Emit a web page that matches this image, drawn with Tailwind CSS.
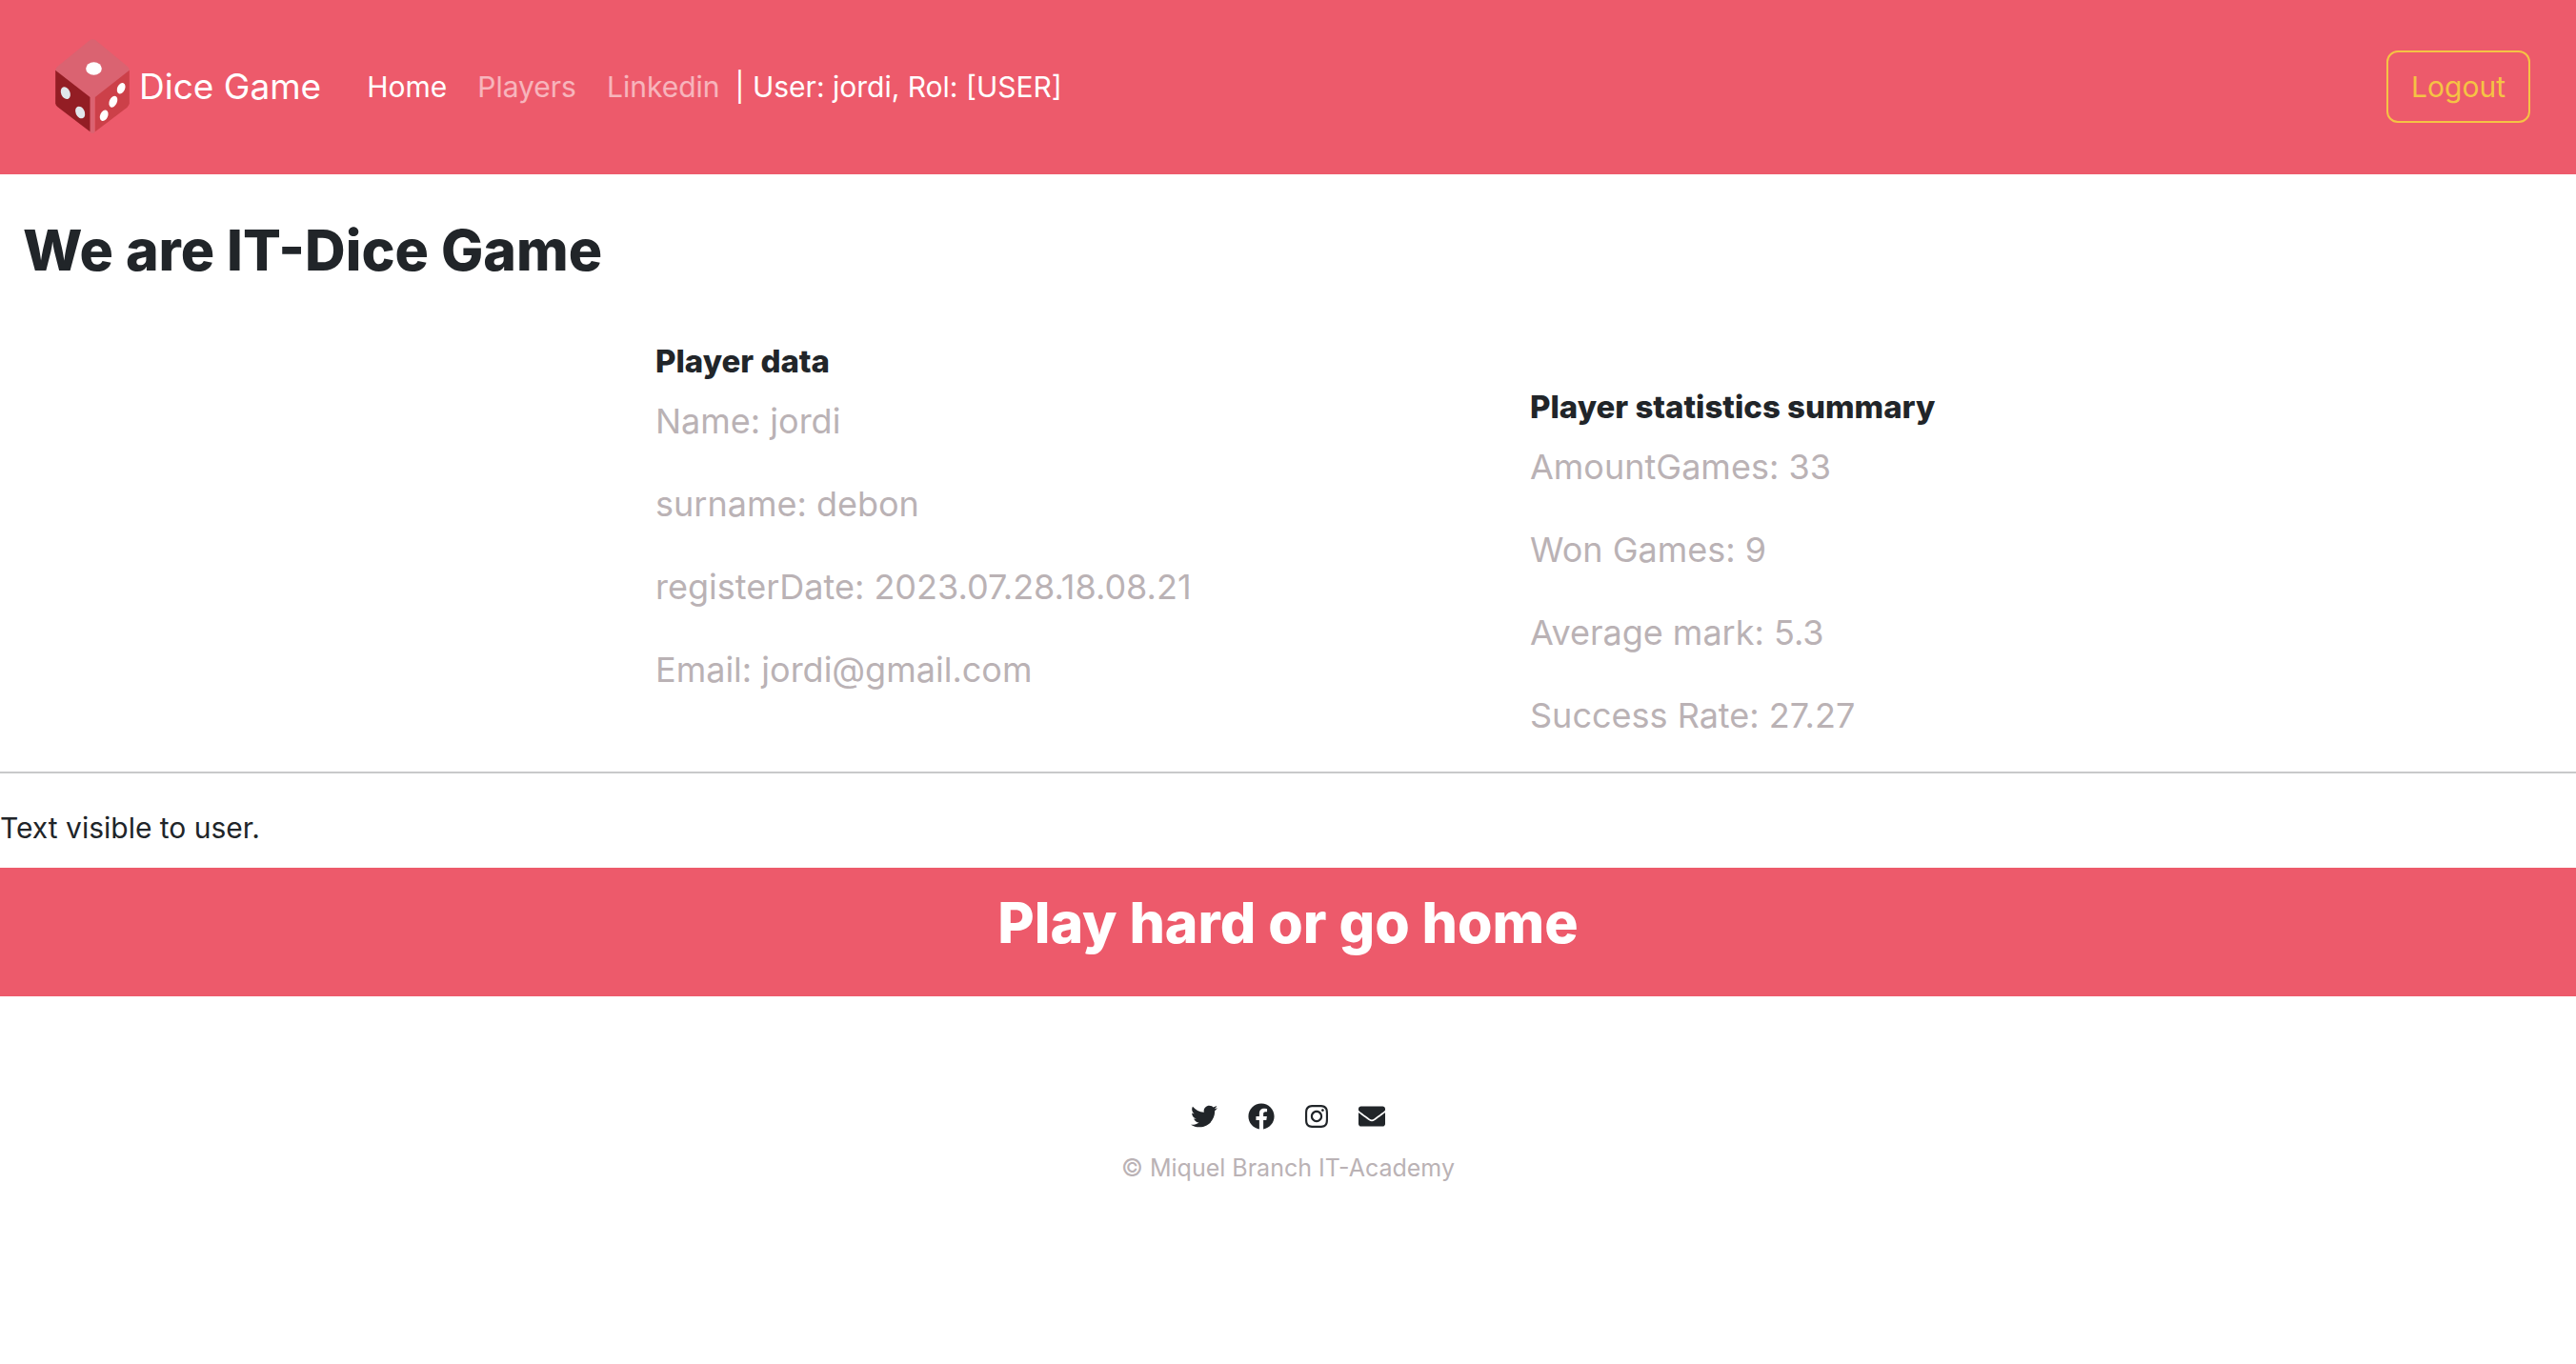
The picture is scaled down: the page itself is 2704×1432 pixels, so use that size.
<!DOCTYPE html>
<html lang="en">
<head>
<meta charset="utf-8">
<meta name="viewport" content="width=device-width, initial-scale=1">
<title>Dice Game</title>
<script src="https://cdn.jsdelivr.net/npm/@tailwindcss/browser@4"></script>
</head>
<body class="bg-white font-['Inter',sans-serif] text-[30px] leading-[48px] text-[#212529]">
<header class="flex min-h-[183px] items-center bg-[#ed5a6b] pr-12 pb-[2px] pl-[58px]">
  <a href="#" class="flex items-center gap-[10px] text-[37px] text-white">
    <svg class="h-[99px] w-[78px]" viewBox="55 30 233 297" aria-hidden="true">
      <path d="M164 33Q172 28 181 33L283 117Q288 122 288 130L179 222V323Q172 330 164 323V222L55 130Q55 122 61 117Z" fill="#da6371"/>
      <path d="M55 128L164 213V322L61 243Q55 238 55 232Z" fill="#931d24"/>
      <path d="M288 128L180 213V322L281 245Q288 239 288 232Z" fill="#cc4049"/>
      <ellipse cx="176" cy="123" rx="25" ry="20" fill="#fff"/>
      <g fill="#e1e6eb">
        <ellipse cx="87" cy="200" rx="14" ry="20" transform="rotate(-25 87 200)"/>
        <ellipse cx="133" cy="261" rx="14" ry="20" transform="rotate(-25 133 261)"/>
      </g>
      <g fill="#fff">
        <ellipse cx="262" cy="185" rx="12" ry="18" transform="rotate(24 262 185)"/>
        <ellipse cx="237" cy="227" rx="12" ry="19" transform="rotate(24 237 227)"/>
        <ellipse cx="208" cy="271" rx="12" ry="18" transform="rotate(24 208 271)"/>
      </g>
    </svg>
    <span>Dice Game</span>
  </a>
  <nav class="ml-12 flex items-center gap-8 text-white">
    <a href="#">Home</a>
    <a href="#" class="text-white/55">Players</a>
    <a href="#" class="text-white/55">Linkedin</a>
  </nav>
  <span class="ml-4 text-white">| User: jordi, Rol: [USER]</span>
  <button type="button" class="ml-auto rounded-xl border-2 border-[#f5c344] px-6 py-3 text-[#f5c344]">Logout</button>
</header>
<main>
  <h1 class="px-6 pt-12 text-[59px] leading-[64px] font-extrabold">We are IT-Dice Game</h1>
  <div class="grid grid-cols-[688fr_918fr_1098fr] pt-[60px]">
    <section class="col-start-2">
      <h2 class="pb-[10px] text-[33px] leading-[48px] font-extrabold">Player data</h2>
      <div class="flex flex-col gap-[29px] text-[36px] leading-[58px] text-[#bab2b5]">
        <p>Name: jordi</p>
        <p>surname: debon</p>
        <p>registerDate: 2023.07.28.18.08.21</p>
        <p>Email: jordi@gmail.com</p>
      </div>
    </section>
    <section class="pt-12">
      <h2 class="pb-[10px] text-[33px] leading-[48px] font-extrabold">Player statistics summary</h2>
      <div class="flex flex-col gap-[29px] text-[36px] leading-[58px] text-[#bab2b5]">
        <p>AmountGames: 33</p>
        <p>Won Games: 9</p>
        <p>Average mark: 5.3</p>
        <p>Success Rate: 27.27</p>
      </div>
    </section>
  </div>
  <hr class="mt-[30px] border-t-2 border-[#c8c9ca]">
  <p class="pt-[33px] pb-[18px]">Text visible to user.</p>
  <div class="bg-[#ed5a6b] pt-[26px] pb-[45px] text-center text-[59px] leading-[64px] font-extrabold text-white">Play hard or go home</div>
</main>
<footer class="pt-[112px] text-center">
  <div class="flex justify-center gap-8">
    <a href="#" aria-label="Twitter"><svg class="size-7" viewBox="0 0 512 512" fill="currentColor"><path d="M459.37 151.716c.325 4.548.325 9.097.325 13.645 0 138.72-105.583 298.558-298.558 298.558-59.452 0-114.68-17.219-161.137-47.106 8.447.974 16.568 1.299 25.34 1.299 49.055 0 94.213-16.568 130.274-44.832-46.132-.975-84.792-31.188-98.112-72.772 6.498.974 12.995 1.624 19.818 1.624 9.421 0 18.843-1.3 27.614-3.573-48.081-9.747-84.143-51.98-84.143-102.985v-1.299c13.969 7.797 30.214 12.67 47.431 13.319-28.264-18.843-46.781-51.005-46.781-87.391 0-19.492 5.197-37.36 14.294-52.954 51.655 63.675 129.3 105.258 216.365 109.807-1.624-7.797-2.599-15.918-2.599-24.04 0-57.828 46.782-104.934 104.934-104.934 30.213 0 57.502 12.67 76.67 33.137 23.715-4.548 46.456-13.32 66.599-25.34-7.798 24.366-24.366 44.833-46.132 57.827 21.117-2.273 41.584-8.122 60.426-16.243-14.292 20.791-32.161 39.308-52.628 54.253z"/></svg></a>
    <a href="#" aria-label="Facebook"><svg class="size-7" viewBox="0 0 512 512" fill="currentColor"><path d="M504 256C504 119 393 8 256 8S8 119 8 256c0 123.78 90.69 226.38 209.25 245V327.69h-63V256h63v-54.64c0-62.15 37-96.48 93.67-96.48 27.14 0 55.52 4.84 55.52 4.84v61h-31.28c-30.8 0-40.41 19.12-40.41 38.73V256h68.78l-11 71.69h-57.78V501C413.31 482.38 504 379.78 504 256z"/></svg></a>
    <a href="#" aria-label="Instagram"><svg class="h-7 w-6" viewBox="0 0 448 512" fill="currentColor"><path d="M224.1 141c-63.6 0-114.9 51.3-114.9 114.9s51.3 114.9 114.9 114.9S339 319.5 339 255.9 287.7 141 224.1 141zm0 189.6c-41.1 0-74.7-33.5-74.7-74.7s33.5-74.7 74.7-74.7 74.7 33.5 74.7 74.7-33.6 74.7-74.7 74.7zm146.4-194.3c0 14.9-12 26.8-26.8 26.8-14.9 0-26.8-12-26.8-26.8s12-26.8 26.8-26.8 26.8 12 26.8 26.8zm76.1 27.2c-1.7-35.9-9.9-67.7-36.2-93.9-26.2-26.2-58-34.4-93.9-36.2-37-2.1-147.9-2.1-184.9 0-35.8 1.7-67.6 9.9-93.9 36.1s-34.4 58-36.2 93.9c-2.1 37-2.1 147.9 0 184.9 1.7 35.9 9.9 67.7 36.2 93.9s58 34.4 93.9 36.2c37 2.1 147.9 2.1 184.9 0 35.9-1.7 67.7-9.9 93.9-36.2 26.2-26.2 34.4-58 36.2-93.9 2.1-37 2.1-147.8 0-184.8zM398.8 388c-7.8 19.6-22.9 34.7-42.6 42.6-29.5 11.7-99.5 9-132.1 9s-102.7 2.6-132.1-9c-19.6-7.8-34.7-22.9-42.6-42.6-11.7-29.5-9-99.5-9-132.1s-2.6-102.7 9-132.1c7.8-19.6 22.9-34.7 42.6-42.6 29.5-11.7 99.5-9 132.1-9s102.7-2.6 132.1 9c19.6 7.8 34.7 22.9 42.6 42.6 11.7 29.5 9 99.5 9 132.1s2.7 102.7-9 132.1z"/></svg></a>
    <a href="#" aria-label="Email"><svg class="size-7" viewBox="0 0 512 512" fill="currentColor"><path d="M502.3 190.8c3.9-3.1 9.7-.2 9.7 4.7V400c0 26.5-21.5 48-48 48H48c-26.5 0-48-21.5-48-48V195.6c0-5 5.7-7.8 9.7-4.7 22.4 17.4 52.1 39.5 154.1 113.6 21.1 15.4 56.7 47.8 92.2 47.6 35.7.3 72-32.8 92.3-47.6 102-74.1 131.6-96.3 154-113.7zM256 320c23.2.4 56.6-29.2 73.4-41.4 132.7-96.3 142.8-104.7 173.4-128.7 5.8-4.5 9.2-11.5 9.2-18.9v-19c0-26.5-21.5-48-48-48H48c-26.5 0-48 21.5-48 48v19c0 7.4 3.4 14.3 9.2 18.9 30.6 23.9 40.7 32.4 173.4 128.7 16.8 12.2 50.2 41.8 73.4 41.4z"/></svg></a>
  </div>
  <p class="pt-5 text-[25px] leading-10 text-[#bab2b5]">© Miquel Branch IT-Academy</p>
</footer>
</body>
</html>
